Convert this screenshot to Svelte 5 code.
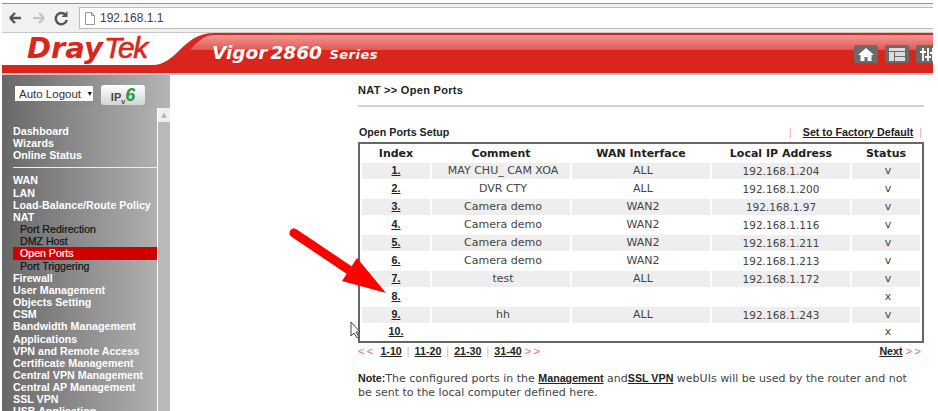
<script>
    const menuTop = ['Dashboard', 'Wizards', 'Online Status']
    const menuA = ['WAN', 'LAN', 'Load-Balance/Route Policy', 'NAT']
    const natSub = ['Port Redirection', 'DMZ Host', 'Open Ports', 'Port Triggering']
    const menuB = ['Firewall', 'User Management', 'Objects Setting', 'CSM', 'Bandwidth Management', 'Applications', 'VPN and Remote Access', 'Certificate Management', 'Central VPN Management', 'Central AP Management', 'SSL VPN', 'USB Application']

    const rows = [
        ['1.', 'MAY CHU_ CAM XOA', 'ALL', '192.168.1.204', 'v'],
        ['2.', 'DVR CTY', 'ALL', '192.168.1.200', 'v'],
        ['3.', 'Camera demo', 'WAN2', '192.168.1.97', 'v'],
        ['4.', 'Camera demo', 'WAN2', '192.168.1.116', 'v'],
        ['5.', 'Camera demo', 'WAN2', '192.168.1.211', 'v'],
        ['6.', 'Camera demo', 'WAN2', '192.168.1.213', 'v'],
        ['7.', 'test', 'ALL', '192.168.1.172', 'v'],
        ['8.', '', '', '', 'x'],
        ['9.', 'hh', 'ALL', '192.168.1.243', 'v'],
        ['10.', '', '', '', 'x']
    ]
    const pages = ['1-10', '11-20', '21-30', '31-40']
</script>

<div class="page">
    <div class="toolbar">
        <svg class="nav-icons" width="70" height="20" viewBox="0 0 70 20">
            <path d="M10 10H21M10 10l5-5M10 10l5 5" fill="none" stroke="#555" stroke-width="2.4"/>
            <path d="M33 10H44M44 10l-5-5M44 10l-5 5" fill="none" stroke="#c4c4c4" stroke-width="2.2"/>
            <path d="M66 7.5a5.6 5.6 0 1 0 .8 4.5" fill="none" stroke="#555" stroke-width="2.4"/>
            <path d="M67.5 3v6h-6z" fill="#555"/>
        </svg>
        <div class="address">
            <svg width="10" height="13" viewBox="0 0 10 13">
                <path d="M.5.5h6l3 3v9H.5zM6.5.5v3h3" fill="#fff" stroke="#999"/>
            </svg>
            <span>192.168.1.1</span>
        </div>
    </div>

    <header class="banner">
        <svg class="swoosh" width="931" height="40" viewBox="0 0 931 40" preserveAspectRatio="none">
            <defs>
                <linearGradient id="gloss" x1="0" y1="0" x2="0" y2="1">
                    <stop offset="0" stop-color="#f09a98"/>
                    <stop offset="1" stop-color="#e2564f"/>
                </linearGradient>
            </defs>
            <path d="M0 32H150C176 32 180 0 212 0H931V40H0z" fill="#d9251c"/>
            <path d="M188 17C196 8 202 2 214 2H931V17z" fill="url(#gloss)"/>
        </svg>
        <div class="logo"><b>Dray</b><i>Tek</i></div>
        <div class="model">Vigor<span class="num">2860</span> <span class="series">Series</span></div>
        <div class="shortcuts">
            <span class="shortcut">
                <svg width="16" height="13" viewBox="0 0 16 13"><path d="M8 0L0 7h2.500v6h4V9h3v4h4V7H16z" fill="#fff"/></svg>
            </span>
            <span class="shortcut">
                <svg width="16" height="13" viewBox="0 0 16 13"><path d="M0 0h16v3H0zM0 4h5v9H0zM6 4h10v4H6zM6 9h10v4H6z" fill="#ddd"/></svg>
            </span>
            <span class="shortcut">
                <svg width="16" height="13" viewBox="0 0 16 13"><path d="M2 0h2v13H2zM7 0h2v13H7zM12 0h2v13h-2z" fill="#eee"/><path d="M0 3h6v2H0zM5 8h6v2H5zM10 4h6v2h-6z" fill="#fff"/></svg>
            </span>
        </div>
    </header>

    <div class="body">
        <aside class="sidebar">
            <div class="side-top">
                <div class="select">Auto Logout <span class="caret">▼</span></div>
                <div class="ipv6">IP<sub>v</sub><em>6</em></div>
            </div>
            <div class="side-main">
                <nav class="menu">
                    {#each menuTop as m}<div class="item">{m}</div>{/each}
                    <hr />
                    {#each menuA as m}<div class="item">{m}</div>{/each}
                    {#each natSub as m}
                        <div class="sub" class:active={m === 'Open Ports'}>{m}</div>
                    {/each}
                    {#each menuB as m}<div class="item">{m}</div>{/each}
                </nav>
                <div class="scrollbar">
                    <div class="arrow">▲</div>
                    <div class="thumb"></div>
                </div>
            </div>
        </aside>

        <main class="content">
            <div class="crumb">NAT &gt;&gt; Open Ports</div>
            <div class="title-row">
                <span class="title">Open Ports Setup</span>
                <span class="factory"><i>|</i><a href="#top">Set to Factory Default</a><i>|</i></span>
            </div>
            <table>
                <colgroup>
                    <col style="width:68px" /><col style="width:138px" /><col style="width:138px" /><col style="width:138px" /><col style="width:68px" />
                </colgroup>
                <thead>
                    <tr><th>Index</th><th>Comment</th><th>WAN Interface</th><th>Local IP Address</th><th>Status</th></tr>
                </thead>
                <tbody>
                    {#each rows as r, i}
                        <tr class:shade={i % 2 === 0}>
                            <td><a class="idx" href="#top">{r[0]}</a></td>
                            <td>{r[1]}</td>
                            <td>{r[2]}</td>
                            <td class="ip">{r[3]}</td>
                            <td>{r[4]}</td>
                        </tr>
                    {/each}
                </tbody>
            </table>
            <div class="pager">
                <span>
                    <i class="pink first">&lt;&lt;</i>
                    {#each pages as p, i}
                        <a href="#top">{p}</a>{#if i < pages.length - 1}<i class="sep">|</i>{/if}
                    {/each}
                    <i class="pink">&gt;&gt;</i>
                </span>
                <span><a href="#top">Next</a> <i class="pink">&gt;&gt;</i></span>
            </div>
            <p class="note">
                <b>Note:</b>The configured ports in the <a href="#top">Management</a> and<a href="#top"> SSL VPN</a> webUIs will be used by the router and not be sent to the local computer defined here.
            </p>
        </main>
    </div>

    <svg class="overlay" width="938" height="411" viewBox="0 0 938 411">
        <path d="M294 233L352 272" stroke="#fe0000" stroke-width="9" stroke-linecap="round"/>
        <path d="M386 293L342 281L357 258z" fill="#fe0000"/>
        <path d="M351 322v14l3-3 3 5 2-1-3-5h4z" fill="#fff" stroke="#444" stroke-width="1"/>
    </svg>
</div>

<style>
    :global(body) {
        background: #fff;
        overflow: hidden;
    }
    .page {
        position: relative;
        width: 931px;
        height: 411px;
        margin-left: 2px;
        padding-top: 3px;
        box-sizing: border-box;
        overflow: hidden;
        font-family: "DejaVu Sans", sans-serif;
    }
    .toolbar {
        display: flex;
        align-items: center;
        height: 30px;
        box-sizing: border-box;
        border-top: 1px solid #a58a8e;
        border-bottom: 1px solid #c9c9c9;
        background: #f1f1f1;
    }
    .nav-icons {
        flex: none;
        margin-left: -2px;
        margin-right: 9px;
    }
    .address {
        flex: 1;
        display: flex;
        align-items: center;
        gap: 5px;
        height: 22px;
        box-sizing: border-box;
        padding-left: 5px;
        background: #fff;
        border: 1px solid #bbb;
        border-right: none;
        font: 12px "Liberation Sans", sans-serif;
        color: #3c3c5c;
    }
    .banner {
        position: relative;
        height: 40px;
        background: #fff;
        border-bottom: 2px solid #c8c8c8;
    }
    .swoosh {
        position: absolute;
        left: 0;
        top: 0;
    }
    .logo {
        position: absolute;
        left: 25px;
        top: -2px;
        font: italic bold 29px "DejaVu Sans", sans-serif;
        color: #d9261e;
    }
    .logo i {
        font: italic 30px "Liberation Sans", sans-serif;
        -webkit-text-stroke: 0.6px #d9261e;
        letter-spacing: -1.500px;
        margin-left: 1px;
    }
    .model {
        position: absolute;
        left: 210px;
        top: 9px;
        font: italic bold 18.500px "DejaVu Sans", sans-serif;
        color: #fff;
        white-space: nowrap;
    }
    .num {
        margin-left: 3px;
    }
    .series {
        font-size: 13px;
        letter-spacing: 0.5px;
        margin-left: 1px;
    }
    .shortcuts {
        position: absolute;
        left: 852px;
        top: 12px;
        display: flex;
        gap: 7px;
    }
    .shortcut {
        display: flex;
        flex: none;
        width: 24px;
        height: 18px;
        align-items: center;
        justify-content: center;
        background: #6a6a6a;
        border-radius: 2px;
    }
    .body {
        display: flex;
    }
    .sidebar {
        flex: none;
        width: 168px;
        height: 342px;
        overflow: hidden;
    }
    .side-top {
        display: flex;
        align-items: flex-start;
        gap: 8px;
        height: 33px;
        padding: 11px 0 0 13px;
        box-sizing: border-box;
        background: linear-gradient(90deg, #686868, #b4b4b4);
    }
    .select {
        width: 78px;
        height: 15px;
        box-sizing: border-box;
        background: #fff;
        font: 11.500px/15px "Liberation Sans", sans-serif;
        color: #333;
        padding-left: 4px;
        white-space: nowrap;
    }
    .caret {
        font-size: 7px;
        margin-left: 2px;
        vertical-align: 2px;
        color: #111;
    }
    .ipv6 {
        width: 44px;
        height: 20px;
        margin-top: -1px;
        border-radius: 3px;
        text-align: center;
        background: linear-gradient(#fff, #d4d4d4);
        font: bold 11px/20px "Liberation Sans", sans-serif;
        color: #444;
    }
    .ipv6 sub {
        font-size: 7px;
        line-height: 0;
    }
    .ipv6 em {
        font: italic bold 18px/20px "Liberation Sans", sans-serif;
        color: #2c9a3c;
    }
    .side-main {
        display: flex;
        height: 309px;
    }
    .menu {
        flex: none;
        width: 155px;
        padding: 17px 0 0 11px;
        box-sizing: border-box;
        background: linear-gradient(90deg, #686868, #b0b0b0);
        font: bold 10.700px/12.150px "Liberation Sans", sans-serif;
        white-space: nowrap;
    }
    .item {
        color: #fff;
    }
    hr {
        border: none;
        height: 1px;
        background: #eee;
        margin: 6px 0 6px;
    }
    .sub {
        padding-left: 7px;
        font-weight: normal;
        -webkit-text-stroke: 0.2px #111;
        font-size: 10.600px;
        color: #111;
    }
    .sub.active {
        background: #d00000;
        color: #fff;
        -webkit-text-stroke: 0.2px #fff;
    }
    .scrollbar {
        flex: none;
        width: 12px;
        margin-left: 1px;
        display: flex;
        flex-direction: column;
    }
    .arrow {
        height: 14px;
        background: #f0f0f0;
        color: #b4b4b4;
        font-size: 7px;
        line-height: 14px;
        text-align: center;
    }
    .thumb {
        flex: 1;
        background: #b9b9b9;
    }
    .content {
        flex: none;
        width: 763px;
        padding: 9px 9px 0 188px;
        box-sizing: border-box;
    }
    .crumb {
        font: bold 11px/13px "Liberation Sans", sans-serif;
        letter-spacing: 0.3px;
        color: #222;
        padding-bottom: 8px;
        border-bottom: 2px solid #d2d2d2;
    }
    .title-row {
        display: flex;
        justify-content: space-between;
        margin-top: 18px;
        padding-right: 2px;
        font: bold 10.700px/14px "Liberation Sans", sans-serif;
        color: #222;
    }
    .title-row .title {
        margin-left: 1px;
    }
    .factory i {
        font-style: normal;
        font-weight: normal;
        color: #f3a0c0;
        margin: 0 11px 0 0;
    }
    .factory i:last-child {
        margin: 0 0 0 6px;
    }
    a {
        color: #222;
    }
    table {
        width: 566px;
        margin-top: 3px;
        table-layout: fixed;
        border: 2px solid #666;
        border-collapse: separate;
        border-spacing: 2px;
        font-size: 11px;
        color: #444;
    }
    th {
        height: 15px;
        padding: 0;
        font-size: 11px;
        color: #222;
        text-align: center;
    }
    td {
        height: 16px;
        padding: 0;
        text-align: center;
        line-height: 16px;
    }
    td:nth-child(2), td:nth-child(3), td:nth-child(5) {
        padding-left: 4px;
        box-sizing: border-box;
    }
    td.ip {
        font-size: 10.500px;
    }
    tr:last-child td {
        height: 14px;
        line-height: 14px;
    }
    .shade td {
        background: #eee;
    }
    .idx {
        font: bold 10.700px "Liberation Sans", sans-serif;
    }
    .pager {
        display: flex;
        justify-content: space-between;
        margin-top: 1px;
        padding-right: 1px;
        font: bold 10.700px/14px "Liberation Sans", sans-serif;
        color: #222;
    }
    .pink {
        font-style: normal;
        font-weight: normal;
        font-size: 11.500px;
        color: #f76b6b;
        letter-spacing: 2px;
    }
    .pink.first {
        margin-right: 2px;
    }
    .sep {
        font-style: normal;
        font-weight: normal;
        color: #f5b08a;
        margin: 0 5px;
    }
    .note {
        margin: 14px 14px 0 0;
        font-size: 11px;
        line-height: 14px;
        color: #444;
    }
    .note b {
        color: #222;
        font: bold 10.700px "Liberation Sans", sans-serif;
    }
    .note a {
        font: bold 10.700px "Liberation Sans", sans-serif;
    }
    .overlay {
        position: absolute;
        left: -2px;
        top: 0;
        pointer-events: none;
    }
</style>
